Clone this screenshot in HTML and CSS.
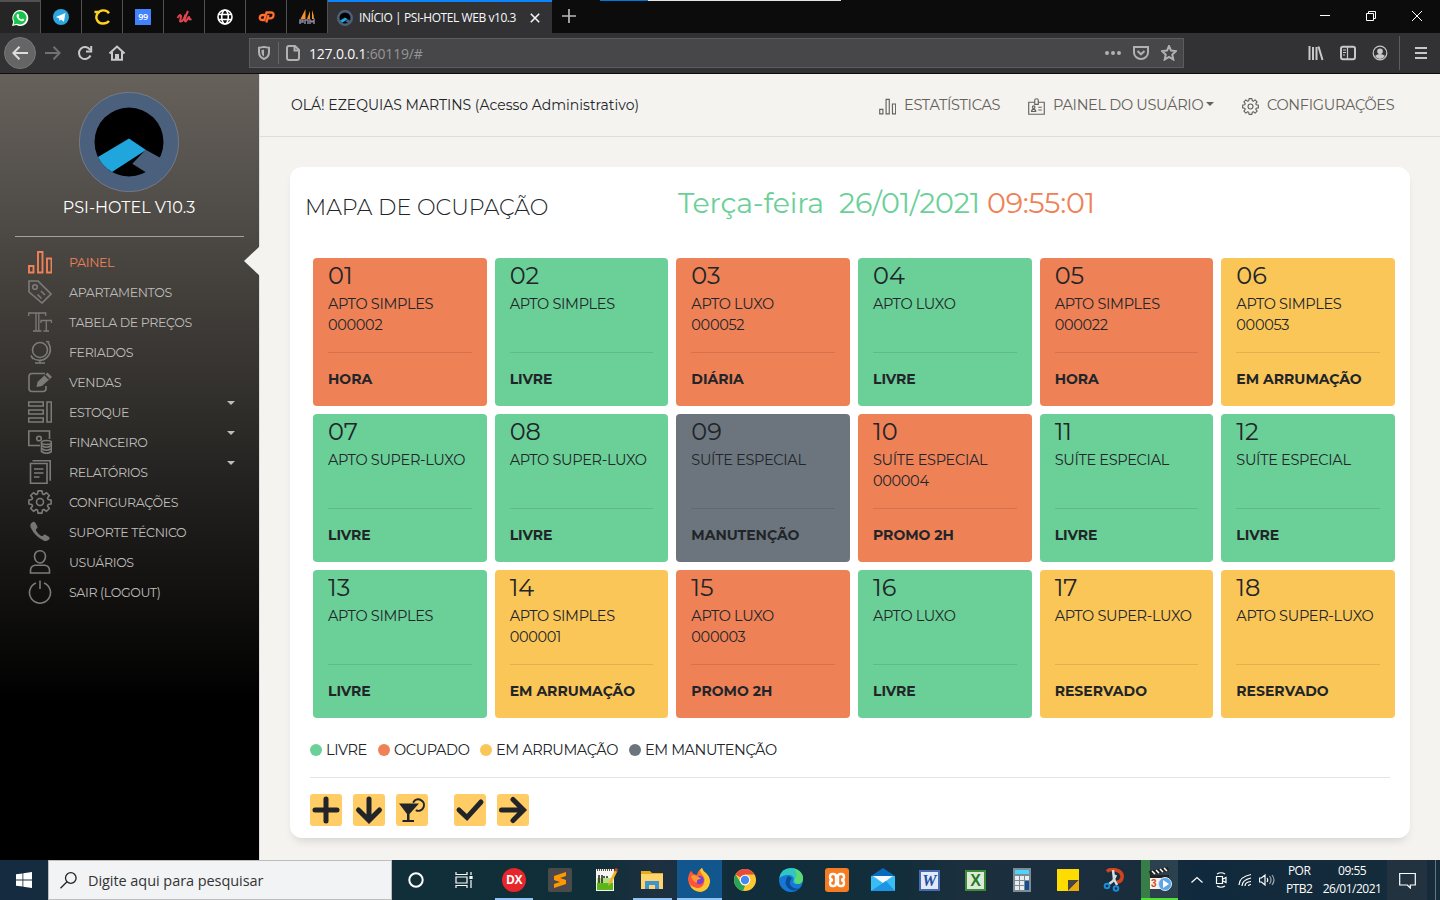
FILE: index.html
```html
<!DOCTYPE html>
<html lang="pt-BR">
<head>
<meta charset="utf-8">
<title>INÍCIO | PSI-HOTEL WEB v10.3</title>
<link rel="stylesheet" href="styles.css">
</head>
<body>
<svg class="defs" aria-hidden="true">
  <symbol id="i-bars" viewBox="0 0 24 24"><path d="M1 16h4.500v6.500H1zM10 2h4.500v20.500H10zM19 8.500h4.500v14H19z"/></symbol>
  <symbol id="i-gear" viewBox="0 0 24 24"><circle cx="12" cy="12" r="3.500"/><path stroke-linejoin="round" d="M9.500 3.900 10 .9h4l.5 3 1.500.6 2.500-1.800 2.800 2.800L19.500 8l.6 1.500 3 .5v4l-3 .5-.6 1.500 1.800 2.500-2.800 2.800-2.500-1.800-1.500.6-.5 3h-4l-.5-3-1.500-.6-2.500 1.800-2.800-2.800L4.500 16l-.6-1.500-3-.5v-4l3-.5L4.500 8 2.700 5.500l2.800-2.800L8 4.500z"/></symbol>
  <symbol id="i-logo" viewBox="0 0 100 100"><circle cx="50" cy="50" r="49.700" fill="#4b607c" stroke="#8c8f94" stroke-width=".6"/><circle cx="50" cy="50" r="34.500"/><path d="M50 46.500 67 58 33 80a35 35 0 0 1-14-15z" fill="#20a5dc"/><path d="m66.700 57.700 19 10.500L72 83.500 53.300 71.700z" fill="#4b607c"/></symbol>
</svg>
<div class="screen">
  <header class="browser">
    <div class="tabs">
      <div class="pin on"><svg width="18" height="18" viewBox="0 0 18 18"><path d="m1 17 1.200-4.300A8 8 0 1 1 5.400 16z" fill="#fff"/><path d="m2.600 15.400.8-2.900A6.600 6.600 0 1 1 6 14.800z" fill="#18c24b"/><path d="M6.300 5q1-1 1.600 1l.3 1-.7 1q1 1.800 2.900 2.400l.9-1 2 1.100q-.4 2.200-2.700 1.700Q6.500 11 5.600 7.500 5.300 6 6.300 5z" fill="#fff"/></svg></div>
      <div class="pin"><svg width="16" height="16" viewBox="0 0 16 16"><circle cx="8" cy="8" r="8" fill="#2ca5e0"/><path d="m2.800 8 9.700-4-1.600 8.700-3-2.100-1.500 1.500-.3-2.800z" fill="#fff"/></svg></div>
      <div class="pin"><svg width="16" height="16" viewBox="0 0 16 16" fill="none" stroke="#ffd21c" stroke-width="2.400"><path d="M.5 3H6M15 4.200C12 .2 6 .7 3.600 4.400 0 10 5 15 9 14.500q4 0 6-2.500"/></svg></div>
      <div class="pin"><span class="n99">99</span></div>
      <div class="pin"><svg width="16" height="16" viewBox="0 0 16 16" fill="none" stroke="#e2474f" stroke-width="2"><path d="M1.500 9q3-5 3.500-1.500C5 10 3 13 5 12.500c2 0 4-5 4.500-7M12 2C9 8 8 12.500 9.500 12.500S12 8 13 8s-1 4 2.500 2"/></svg></div>
      <div class="pin"><svg width="16" height="16" viewBox="0 0 16 16" fill="none" stroke="#fff" stroke-width="1.600"><circle cx="8" cy="8" r="7"/><ellipse cx="8" cy="8" rx="3.300" ry="7"/><path d="M1.500 5.500h13M1.500 10.500h13"/></svg></div>
      <div class="pin"><svg width="17" height="16" viewBox="0 0 17 16" fill="none" stroke="#ff6c2c" stroke-width="2.300"><path d="M7 6H5Q2 6 1.800 8.500T4.500 11H6.300L8.500 3.500H13q3 0 2.500 3T12 9.300h-1.500M10.500 6 8.300 13.500"/></svg></div>
      <div class="pin"><svg width="18" height="18" viewBox="0 0 18 18"><path d="M7.500 1v10H2.500zM12 3v8H9zM14 2q2 5 2 9h-2z" fill="#f79420"/><path d="M2 16v-4h3v2H2m5 2v-4h3v4m2 0v-4l2 2 2-2v4" fill="none" stroke="#8987a3" stroke-width="1.500"/></svg></div>
      <div class="tab"><svg width="16" height="16"><use href="#i-logo"/></svg><span class="tabname">INÍCIO | PSI-HOTEL WEB v10.3</span><svg class="x" width="10" height="10" viewBox="0 0 10 10"><path d="m.8.800 8.400 8.400M9.200.8.800 9.200" stroke="#f4f4f4" stroke-width="1.600"/></svg></div>
      <svg class="plus" width="14" height="14" viewBox="0 0 14 14"><path d="M7 0v14M0 7h14" stroke="#b9b9ba" stroke-width="1.700"/></svg>
      <div class="loadbar"></div>
      <div class="win">
        <svg width="10" height="10" viewBox="0 0 10 10"><path d="M0 4.500h10"/></svg>
        <svg width="10" height="10" viewBox="0 0 10 10"><path d="M.5 2.500h7v7h-7zM2.500 2V.5h7v7H8"/></svg>
        <svg width="10" height="10" viewBox="0 0 10 10"><path d="m0 0 10 10M10 0 0 10"/></svg>
      </div>
    </div>
    <div class="toolbar">
      <div class="back"><svg width="16" height="14" viewBox="0 0 16 14"><path d="M16 7H1.500M7.500.8 1.300 7l6.200 6.200"/></svg></div>
      <svg class="fwd" width="16" height="14" viewBox="0 0 16 14"><path d="M0 7h14.500M8.500.8 14.700 7l-6.200 6.200"/></svg>
      <svg class="rel" width="16" height="16" viewBox="0 0 16 16"><path d="M13.500 10.500A6 6 0 1 1 13 4.700M14.200 1v5.500H9"/></svg>
      <svg class="home" width="16" height="16" viewBox="0 0 16 16"><path d="m.5 8.500 7.500-7 7.500 7M3 7v7.800h10V7M7 14.500V10h2v4.500"/></svg>
      <div class="url">
        <svg width="12" height="14" viewBox="0 0 12 14"><path d="M1 1.800Q4 1.500 6 .9q2 .6 5 .9v4.500Q11 11 6 13 1 11 1 6.300z"/><path d="M6 3.500q-2 .5-2.500.5Q3 9 6 10.500" fill="#b1b1b3" stroke="none"/></svg>
        <i></i>
        <svg width="14" height="16" viewBox="0 0 14 16"><path d="M3 1h6l4 4v8q0 2-2 2H3q-2 0-2-2V3q0-2 2-2zM8.500 1v4.500H13"/></svg>
        <span class="addr">127.0.0.1<em>:60119/#</em></span>
        <svg class="dots" width="16" height="16" viewBox="0 0 16 16"><path d="M2 6a2 2 0 1 1 0 4 2 2 0 0 1 0-4m6 0a2 2 0 1 1 0 4 2 2 0 0 1 0-4m6 0a2 2 0 1 1 0 4 2 2 0 0 1 0-4" fill="#b1b1b3" stroke="none"/></svg>
        <svg width="16" height="16" viewBox="0 0 16 16"><path d="M1 2h14v5.500a7 6.500 0 0 1-14 0zM4.500 6 8 9.300 11.500 6"/></svg>
        <svg width="16" height="16" viewBox="0 0 16 16"><path d="m8 1 2 4.600 5 .5-3.700 3.400 1 5L8 12l-4.300 2.500 1-5L1 6.100l5-.5z"/></svg>
      </div>
      <div class="tools">
        <svg width="16" height="16" viewBox="0 0 16 16"><path d="M1.500 1v14M5 2v13M8.500 2v13M10.500 1.500l4 13.500"/></svg>
        <svg width="16" height="16" viewBox="0 0 16 16"><rect x="1" y="1.800" width="14" height="12.400" rx="2"/><path d="M7.500 2v12M3 5h3M3 7.500h3M3 10h2" stroke-width="1.200"/></svg>
        <svg width="16" height="16" viewBox="0 0 16 16"><circle cx="8" cy="8" r="6.800" stroke-width="1.200"/><circle cx="8" cy="6.300" r="2.800" fill="#c8c8ca" stroke="none"/><path d="M3 11q2-2 5-2t5 2q-2 3-5 3t-5-3" fill="#c8c8ca" stroke="none"/></svg>
        <i></i>
        <svg width="12" height="12" viewBox="0 0 12 12"><path d="M0 1h12M0 6h12M0 11h12"/></svg>
      </div>
    </div>
  </header>

  <div class="app">
    <aside class="side">
      <div class="brand"><svg width="100" height="100"><use href="#i-logo"/></svg><span>PSI-HOTEL V10.3</span></div>
      <nav class="menu">
        <a class="act"><svg><use href="#i-bars"/></svg><span>PAINEL</span></a>
        <a><svg viewBox="0 0 24 24"><path d="M1 1h9l13 13-9 9L1 12z"/><circle cx="7" cy="7" r="2.300"/><path d="m9.500 14.500 4 4M13 11l4 4"/></svg><span>APARTAMENTOS</span></a>
        <a><svg viewBox="0 0 24 24"><path d="M.7 6V3h17v3M8 3v18M10.800 3v18M5 21h8.500M13 13v-2.500h10.500V13M18.300 10.500V21M15.500 21h5.500" stroke-width="1.300"/></svg><span>TABELA DE PREÇOS</span></a>
        <a><svg viewBox="0 0 24 24"><circle cx="12" cy="10" r="7.500"/><path d="M18 1.500 21.500 2M20 2.500a11 11 0 0 1-16 15M3 15.500l2 3.500M12 20.500V23M7 23h10"/></svg><span>FERIADOS</span></a>
        <a><svg viewBox="0 0 24 24"><path d="M17 3.500H4Q1 3.500 1 6.500v12q0 3 3 3h11q3 0 3-3V16"/><path d="m8.500 17 1-5L19.500 2.500l4.500 4.500-10 9z" fill="#7d7b78" stroke="none"/><path d="m17 5 4 4" stroke="#35322f"/></svg><span>VENDAS</span></a>
        <a><svg viewBox="0 0 24 24"><path d="M.7 2h14.500v4H.7zM.7 10h14.500v4H.7zM.7 18h14.500v4H.7zM19 2h4.300v20H19z"/></svg><span>ESTOQUE</span><b></b></a>
        <a><svg viewBox="0 0 24 24"><path d="M12 15.500H.8V1h20.700v8"/><circle cx="11" cy="8.500" r="2.300"/><ellipse cx="18.500" cy="12.500" rx="5" ry="2"/><path d="M13.500 12.500v9q5 3.500 10 0v-9m-10 3q5 3.500 10 0m-10 3q5 3.500 10 0"/></svg><span>FINANCEIRO</span><b></b></a>
        <a><svg viewBox="0 0 24 24"><path d="M2.500 3.500H19v19.700H2.500zM4.500.8h17.700v20M6 9h9.500M6 13h9.500M6 17h5.500"/></svg><span>RELATÓRIOS</span><b></b></a>
        <a><svg><use href="#i-gear"/></svg><span>CONFIGURAÇÕES</span></a>
        <a><svg viewBox="0 0 24 24"><path d="M4 2.500q2-1.500 3.300.3l2 3.500q.7 1.500-.8 2.500-1.200 1-.3 2.300 2 3.200 5 4.800 1.200.5 2-.5 1-1.300 2.300-.7l3.300 2q1.500 1 .5 2.500Q19 22 15.500 20.500 6.500 16 2.700 7.500 1.500 4.500 4 2.500z" fill="#777573" stroke="none"/></svg><span>SUPORTE TÉCNICO</span></a>
        <a><svg viewBox="0 0 24 24"><path d="M12 .8c3.500 0 5.500 2.500 5.500 5.500S15.500 13 12 13 6.500 9.500 6.500 6.300 8.500.8 12 .8zM2.500 23v-2.500Q2.500 16 7 15.300h10q4.500.7 4.500 5.200V23z"/></svg><span>USUÁRIOS</span></a>
        <a><svg viewBox="0 0 24 24"><path d="M12 .5V9M8 3a10.500 10.500 0 1 0 8 0"/></svg><span>SAIR (LOGOUT)</span></a>
      </nav>
      <div class="notch"></div>
    </aside>

    <main class="main">
      <div class="top">
        <span class="hello">OLÁ! EZEQUIAS MARTINS (Acesso Administrativo)</span>
        <a class="l1"><svg><use href="#i-bars"/></svg><span>ESTATÍSTICAS</span></a>
        <a class="l2"><svg viewBox="0 0 24 24"><path d="M9 6H1v17h22V6h-8M9.500 9V3q0-2 2.500-2t2.500 2v6zM14.500 13h5M14.500 17h5M5 19q0-3 3-3t3 3z"/><circle cx="8" cy="13" r="1.800"/></svg><span>PAINEL DO USUÁRIO</span><b></b></a>
        <a class="l3"><svg><use href="#i-gear"/></svg><span>CONFIGURAÇÕES</span></a>
      </div>
      <section class="panel">
        <div class="head"><h1>MAPA DE OCUPAÇÃO</h1><div class="clock"><span class="day">Terça-feira</span><span class="date">26/01/2021</span><span class="time">09:55:01</span></div></div>
        <div class="grid">
          <div class="room r"><h2>01</h2><p>APTO SIMPLES<br>000002</p><strong>HORA</strong></div>
          <div class="room g"><h2>02</h2><p>APTO SIMPLES</p><strong>LIVRE</strong></div>
          <div class="room r"><h2>03</h2><p>APTO LUXO<br>000052</p><strong>DIÁRIA</strong></div>
          <div class="room g"><h2>04</h2><p>APTO LUXO</p><strong>LIVRE</strong></div>
          <div class="room r"><h2>05</h2><p>APTO SIMPLES<br>000022</p><strong>HORA</strong></div>
          <div class="room y"><h2>06</h2><p>APTO SIMPLES<br>000053</p><strong>EM ARRUMAÇÃO</strong></div>
          <div class="room g"><h2>07</h2><p>APTO SUPER-LUXO</p><strong>LIVRE</strong></div>
          <div class="room g"><h2>08</h2><p>APTO SUPER-LUXO</p><strong>LIVRE</strong></div>
          <div class="room k"><h2>09</h2><p>SUÍTE ESPECIAL</p><strong>MANUTENÇÃO</strong></div>
          <div class="room r"><h2>10</h2><p>SUÍTE ESPECIAL<br>000004</p><strong>PROMO 2H</strong></div>
          <div class="room g"><h2>11</h2><p>SUÍTE ESPECIAL</p><strong>LIVRE</strong></div>
          <div class="room g"><h2>12</h2><p>SUÍTE ESPECIAL</p><strong>LIVRE</strong></div>
          <div class="room g"><h2>13</h2><p>APTO SIMPLES</p><strong>LIVRE</strong></div>
          <div class="room y"><h2>14</h2><p>APTO SIMPLES<br>000001</p><strong>EM ARRUMAÇÃO</strong></div>
          <div class="room r"><h2>15</h2><p>APTO LUXO<br>000003</p><strong>PROMO 2H</strong></div>
          <div class="room g"><h2>16</h2><p>APTO LUXO</p><strong>LIVRE</strong></div>
          <div class="room y"><h2>17</h2><p>APTO SUPER-LUXO</p><strong>RESERVADO</strong></div>
          <div class="room y"><h2>18</h2><p>APTO SUPER-LUXO</p><strong>RESERVADO</strong></div>
        </div>
        <div class="legend">
          <span class="k1"><i class="g"></i>LIVRE</span><span class="k2"><i class="r"></i>OCUPADO</span><span class="k3"><i class="y"></i>EM ARRUMAÇÃO</span><span class="k4"><i class="k"></i>EM MANUTENÇÃO</span>
        </div>
        <div class="actions">
          <button><svg viewBox="0 0 32 32"><path d="M16 5v22M5 16h22"/></svg></button>
          <button><svg viewBox="0 0 32 32"><path d="M16 5v21M5.500 16 16 26.500 26.500 16"/></svg></button>
          <button class="bar"><svg viewBox="0 0 32 32"><path d="M3 9.500h20L13.500 20v6H18v2H6.500v-2H11v-6z" fill="#212529" stroke="none"/><path d="M17.500 8a5.700 5.700 0 1 1 3 8.500" stroke-width="2"/></svg></button>
          <button><svg viewBox="0 0 32 32"><path d="m5 16 8 7.500L27 8"/></svg></button>
          <button><svg viewBox="0 0 32 32"><path d="M4.500 16H26M16 5.500 26.500 16 16 26.500"/></svg></button>
        </div>
      </section>
    </main>
  </div>

  <footer class="taskbar">
    <div class="start"><svg width="16" height="16" viewBox="0 0 16 16"><path d="m0 2.300 6.500-.9v6.200H0zM7.300 1.300 16 0v7.600H7.300zM0 8.400h6.500v6.200L0 13.700zM7.300 8.400H16V16l-8.700-1.300z" fill="#fff"/></svg></div>
    <div class="search"><svg width="17" height="17" viewBox="0 0 17 17" fill="none" stroke="#222" stroke-width="1.300"><circle cx="10.800" cy="6" r="5.300"/><path d="M7 9.800.5 16.300"/></svg><span>Digite aqui para pesquisar</span></div>
    <div class="apps">
      <div><svg viewBox="0 0 24 24"><circle cx="12" cy="12" r="6.700" fill="none" stroke="#fff" stroke-width="2"/></svg></div>
      <div><svg viewBox="0 0 24 24" fill="none" stroke="#fff" stroke-width="1.200"><path d="M3 4v2.500h11V4M3 20v-2.500h11V20M3 9h11v6H3zM18 4v3M18 12v8"/><path d="M17 8.500h2v2h-2z" fill="#fff"/></svg></div>
      <div class="run"><span class="dx">DX</span></div>
      <div><svg viewBox="0 0 24 24"><rect width="24" height="24" rx="2" fill="#4a4a4a"/><path d="m6 8 12-4v4l-6 2 6 2v4L6 20v-4l6-2-6-2z" fill="#ff9800"/></svg></div>
      <div><svg viewBox="0 0 24 24"><path d="M2 1h18v22H2z" fill="#f5f5ee"/><path d="M3 12h16v10H3z" fill="#5db51c"/><path d="M3 10h16v5H3z" fill="#b4e080"/><path d="M5 7v8M8 7v8M9 9h2m1 0h2" stroke="#222" stroke-width="1.500"/><path d="M3 2h15" stroke="#555" stroke-width="2" stroke-dasharray="1 1"/><path d="m14 18 1-4 6-12 2.500 1-6 12z" fill="#f2b32a"/><path d="m20.500 2.500 1-2.500L24 1l-1 3z" fill="#c43"/></svg></div>
      <div class="run"><svg viewBox="0 0 24 24"><path d="M1 3h9l2 2h11v16H1z" fill="#e8a91e"/><path d="M1 6h22v15H1z" fill="#ffd56b"/><path d="M5 21v-8h14v8h-4v-4H9v4z" fill="#3f93d3"/></svg></div>
      <div class="run cur"><svg viewBox="0 0 24 24"><path d="M1 11Q2 5 4 3l2 3 4 1q1-5 5-7l1 4q7 3 7 9-1 9-11 10Q2 22 1 11" fill="#ff6b2c"/><path d="M15 0q1 3 4 5 4 4 4 9-1 8-9 10-8 0-11-7 8 6 13 0 4-6-2-12-2-3 1-5" fill="#ffc72e"/><path d="M1 11 4 3l3 3 2 2 8 4q0 9-7 8-7-2-9-9" fill="#ff4b42" opacity=".75"/><circle cx="12.500" cy="12" r="4.300" fill="#7543d1"/><path d="m4 8 3-1 5 2 2 2q-5 0-4 4-4-1-6-7" fill="#ff972d"/></svg></div>
      <div><svg viewBox="0 0 24 24"><circle cx="12" cy="12" r="11" fill="#fdc92e"/><path d="M12 12 2.500 6.500a11 11 0 0 1 19 0H12z" fill="#e84b3c"/><path d="M2.500 6.500 9 17l3 1-2 4.800A11 11 0 0 1 2.500 6.500" fill="#28a35a"/><circle cx="12" cy="12" r="5.300" fill="#fff"/><circle cx="12" cy="12" r="4.200" fill="#4489f3"/></svg></div>
      <div><svg viewBox="0 0 24 24"><circle cx="12" cy="12" r="12" fill="#1478d4"/><path d="M.5 10Q2 0 12 0c8 0 12 6 12 10s-3 6-6 6-5-2-3-4q0-5-6-5-5 0-8.500 3" fill="#2fc6c4"/><path d="M15 .5q9 3 9 9.500t-6 6l-3-4q5-4 0-11.500" fill="#5cda70"/><path d="M9 8q-5 7 0 12 6 5 12 0-5 2-9-2-3-4 1-8z" fill="#0c4c97"/></svg></div>
      <div><svg viewBox="0 0 24 24"><rect width="24" height="24" rx="3" fill="#f57c22"/><path d="M7.500 6h1Q11 6 11 8.500V11h2V8.500Q13 6 15.500 6h1Q19 6 19 9t-3 3q3 0 3 3t-2.500 3h-1Q13 18 13 15.500V13h-2v2.500Q11 18 8.500 18h-1Q5 18 5 15t3-3Q5 12 5 9t2.500-3z" fill="none" stroke="#fff" stroke-width="2.400"/></svg></div>
      <div><svg viewBox="0 0 24 24"><path d="m0 8 12-8 12 8z" fill="#0869bd"/><path d="M0 8h24v15H0z" fill="#38bdf5"/><path d="M2 8h20l-10 7z" fill="#f5f8fc"/><path d="m0 23 15-10 9 10z" fill="#1d95e5"/></svg></div>
      <div><span class="office word">W</span></div>
      <div><span class="office excel">X</span></div>
      <div><svg viewBox="0 0 24 24"><path d="M3 0h18v24H3z" fill="#7d8b94"/><path d="M5 2h14v4H5z" fill="#4dd4fc"/><path d="M5 8h4v4H5zm5 0h4v4h-4zm5 0h4v4h-4zM5 13h4v4H5zm5 0h4v4h-4zM5 18h4v4H5zm5 0h4v4h-4z" fill="#e9edf0"/><path d="M15 13h4v9h-4z" fill="#164c91"/></svg></div>
      <div><svg viewBox="0 0 24 24"><path d="M1 1h22v22H1z" fill="#ffdc00"/><path d="M12 23V12h11z" fill="#444"/><path d="M12 23 23 12v11z" fill="#e9aa0b"/></svg></div>
      <div><svg viewBox="0 0 24 24" fill="none"><path d="M5 3.500Q8 .5 14 2q7 2 6 8-1 4-5 4" stroke="#d3441e" stroke-width="3.500"/><path d="m11 2 1 9 3 6M14 7l-3 6-4 3" stroke="#d7dde0" stroke-width="2.500"/><circle cx="5" cy="18" r="2.300" stroke="#178ddc" stroke-width="2"/><circle cx="14" cy="20.500" r="2.300" stroke="#178ddc" stroke-width="2"/></svg></div>
      <div class="movie"><svg viewBox="0 0 24 24"><path d="M2 9h19v13H2z" fill="#f7f2ed"/><path d="m1 4 19-4 1 4L2 8zM2 8h19v3H2z" fill="#222"/><path d="m4 4 3 3m1-4 3 3m1-4 3 3m1-4 3 3" stroke="#fff" stroke-width="1.500"/><text x="3" y="20">3</text><circle cx="17" cy="17" r="6.500" fill="#5ca5e8" stroke="#d7e8f7"/><path d="m15 13 6 4-6 4z" fill="#fff"/></svg></div>
    </div>
    <div class="tray">
      <svg width="12" height="8" viewBox="0 0 12 8"><path d="m.5 6.500 5.500-5 5.500 5"/></svg>
      <svg width="12" height="16" viewBox="0 0 12 16"><path d="M1.500 4.500h6v7h-6zM8 7l3-1.500v5L8 9M2 2q4-2.500 8 0M2 14q4 2.500 8 0"/></svg>
      <svg width="14" height="14" viewBox="0 0 14 14"><path d="M1 12Q1 4 13 1.500M4 13Q4 7 13 5M7 13q0-4 6-4.500M10.500 13q0-1.500 2.500-1.500"/></svg>
      <svg width="16" height="14" viewBox="0 0 16 14"><path d="M.5 5h2L6 2v10L2.500 9h-2zM8 5q1.500 2 0 4"/><path d="M10.500 3q3 4 0 8M13 2q4 5 0 10" opacity=".6"/></svg>
      <div class="two lang">POR<br>PTB2</div>
      <div class="two when">09:55<br>26/01/2021</div>
      <div class="note"><svg width="17" height="17" viewBox="0 0 17 17"><path d="M.7 1.500h15.600V13h-5v3l-3-3H.7z"/></svg></div>
      <div class="edge"></div>
    </div>
  </footer>
</div>
</body>
</html>
```
FILE: styles.css
```css
* { box-sizing: border-box; }
body { margin: 0; font-family: Montserrat, Inter, sans-serif; color: #212529; overflow: hidden; }
h1, h2, p { margin: 0; font-weight: 300; }
svg { flex: none; }
.defs { display: none; }
.screen { width: 1440px; height: 900px; display: flex; flex-direction: column; }

/* browser chrome */
.browser { height: 74px; background: #323234; border-bottom: 1px solid #0c0c0d; font-family: "Open Sans", sans-serif; flex: none; }
.tabs { height: 33px; background: #0c0c0d; display: flex; position: relative; }
.pin { width: 41px; border-right: 1px solid #515152; display: flex; align-items: center; justify-content: center; padding-top: 1px; }
.pin.on { background: #252526; border-top: 2px solid #515152; padding: 0; }
.n99 { width: 16px; height: 16px; background: #4182ff; color: #fff; font-size: 9px; font-weight: 600; line-height: 16px; text-align: center; letter-spacing: -.5px; }
.tab { width: 224px; background: #323234; border-top: 2px solid #0a84ff; display: flex; align-items: center; padding-left: 9px; }
.tabname { color: #f9f9fa; font-size: 12px; letter-spacing: -.43px; width: 171px; margin-left: 6px; white-space: nowrap; }
.plus { margin: 9px 0 0 10px; }
.loadbar { position: absolute; left: 600px; top: 0; width: 241px; height: 1px; background: linear-gradient(90deg, #0078d7 48px, #e6e6e6 48px); }
.win { margin-left: auto; display: flex; gap: 36px; padding: 11px 18px 0 0; fill: none; stroke: #fff; }
.toolbar { height: 40px; display: flex; align-items: center; padding-left: 4px; fill: none; stroke: #b1b1b3; stroke-width: 2; }
.back { width: 32px; height: 32px; border-radius: 50%; background: #656566; border: 1px solid #777; display: flex; align-items: center; justify-content: center; stroke: #ddd; }
.fwd { margin-left: 9px; stroke: #717173; }
.rel { margin-left: 16px; }
.home { margin-left: 16px; }
.rel, .home { stroke: #c8c8ca; }
.url { margin-left: 124px; width: 935px; height: 30px; background: #474749; border: 1px solid #5c5c5e; display: flex; align-items: center; padding: 0 6px 0 8px; }
.url i { width: 1px; height: 22px; background: #65656b; margin: 0 7px 0 8px; }
.url svg:nth-of-type(n+4) { margin-left: 12px; }
.addr { color: #f9f9fa; font-size: 14px; letter-spacing: -.2px; margin-left: 9px; flex: 1; }
.addr em { font-style: normal; color: #969698; }
.tools { display: flex; align-items: center; flex: 1; justify-content: flex-end; gap: 16px; padding-right: 13px; stroke: #c8c8ca; }
.tools i { width: 1px; height: 34px; background: #5c5c5e; margin: 0 -1px 0 -5px; }

/* application */
.app { display: flex; height: 786px; flex: none; }
.side { width: 260px; position: relative; background: linear-gradient(#66615b, #000 80%); border-right: 1px solid #ddd; padding: 18px 15px 0; }
.brand { height: 145px; border-bottom: 1px solid #a5a29e; display: flex; flex-direction: column; align-items: center; color: #fff; font-size: 16px; line-height: 32px; padding-right: 1px; }
.menu { padding-top: 10px; fill: none; stroke: #7d7b78; stroke-width: 1.600; }
.menu a { display: flex; height: 30px; align-items: center; padding-left: 13px; color: #bfbdbb; font-size: 12.600px; letter-spacing: -.38px; position: relative; }
.menu span { margin-top: 1px; }
.menu svg { width: 24px; height: 24px; margin-right: 17px; }
.menu b, .top b { border: 4px solid transparent; border-top-color: currentColor; border-bottom: 0; }
.menu b { margin: -18px 9px 0 auto; }
.menu .act { color: #ef8157; stroke: #ef8157; stroke-width: 1.900; }
.notch { position: absolute; right: -1px; top: 172px; border: 15px solid transparent; border-right: 16px solid #f4f3ef; border-left: 0; }
.main { flex: 1; background: #f4f3ef; }
.top { height: 63px; border-bottom: 1px solid #ddd; display: flex; align-items: center; padding: 0 45px 0 31px; font-size: 14px; }
.hello { flex: 1; }
.top a { display: flex; align-items: center; color: #66615b; font-size: 14.500px; letter-spacing: -.3px; fill: none; stroke: #66615b; stroke-width: 1.600; white-space: nowrap; }
.top svg { width: 17px; height: 17px; margin: 2px 8px 0 0; }
.top a span { margin-top: -1px; }
.l1 span { width: 96px; } .l2 span { width: 152px; } .l3 span { width: 128px; }
.l2 { margin: 0 28px; }
.top b { margin: -2px 0 0 1px; }
.l1 { margin-right: 0; }
.l2 svg { margin-right: 8px; }
.panel { margin: 30px 30px 0; height: 671px; background: #fff; border-radius: 12px; box-shadow: 0 6px 10px -4px rgba(0,0,0,.15); padding: 0 15px; }
.head { height: 91px; display: flex; padding: 20px 0 0 0; }
h1 { font-size: 22.200px; line-height: 41px; width: 373px; }
.clock { font-size: 28.500px; line-height: 32px; font-weight: 400; letter-spacing: -.22px; color: #6bd098; display: flex; white-space: nowrap; }
.day { width: 161px; } .date { width: 148px; } .time { color: #ef8157; }
.grid { display: grid; grid-template-columns: repeat(6, 1fr); grid-auto-rows: 148px; gap: 8px; padding-left: 8px; }
.room { border-radius: 4px; padding: 2px 15px 0; }
h2 { font-size: 24px; line-height: 32px; font-weight: 400; }
.room p { height: 61px; border-bottom: 1px solid rgba(0,0,0,.1); font-size: 14.500px; font-weight: 400; letter-spacing: -.32px; line-height: 21px; padding-top: 2px; white-space: nowrap; }
.room strong { display: block; font-size: 14px; line-height: 21px; margin-top: 16px; }
.g { background: #6bd098; } .r { background: #ef8157; } .y { background: #fbc658; } .k { background: #6c757d; }
.legend { height: 60px; margin: 0 5px; border-bottom: 1px solid #e5e5e5; display: flex; align-items: center; padding-top: 4px; font-size: 14.500px; letter-spacing: -.4px; white-space: nowrap; }
.legend span { display: flex; align-items: center; }
.legend i { width: 12px; height: 12px; border-radius: 50%; margin-right: 4px; }
.k1 { width: 68px; } .k2 { width: 102px; } .k3 { width: 149px; }
.actions { display: flex; gap: 11px; padding: 16px 5px; }
.actions button { width: 32px; height: 32px; padding: 0; border: 0; border-radius: 3px; background: #ffcc66; }
.actions svg { display: block; fill: none; stroke: #212529; stroke-width: 5; stroke-linecap: round; }
.bar { margin-right: 15px; }

/* taskbar */
.taskbar { height: 40px; background: linear-gradient(90deg, #152b40, #142c3e 50px, #102f38 430px, #102e38 600px, #1e3041 655px, #112d3b 730px, #122e3a 900px, #1b2f3d 960px, #192d3d 1140px, #10293c 1200px, #162c3b 1440px); display: flex; font-family: "Open Sans", sans-serif; }
.start { width: 48px; display: flex; align-items: center; justify-content: center; }
.search { width: 344px; background: #f2f3f5; border: 1px solid #bdbdbd; display: flex; align-items: center; padding-left: 11px; color: #333; font-size: 14.500px; letter-spacing: -.06px; }
.search span { margin-left: 11px; }
.apps { display: grid; grid-template-columns: 46px 52px repeat(15, 46.150px); margin-left: 1px; }
.apps div { display: flex; align-items: center; justify-content: center; position: relative; }
.apps svg { width: 24px; height: 24px; }
.apps text { font: bold 10px "Liberation Sans"; fill: #d34818; }
.apps .run { border-bottom: 2px solid #8fc4f5; margin: 0 4px; padding-top: 2px; }
.apps .cur { background: #11568d; margin: 0 0 0 1px; }
.dx { width: 24px; height: 24px; border-radius: 50%; background: #e7252b; color: #fff; font-size: 12px; font-weight: 700; line-height: 24px; text-align: center; letter-spacing: -.5px; }
.office { width: 21px; height: 21px; border: 2px solid #456bb2; background: #e2eafa; color: #244c9c; font: italic bold 16px/17px "Liberation Serif", serif; text-align: center; }
.excel { border-color: #3f8a3b; background: #dcebd6; color: #287a2b; font-family: "Liberation Sans", sans-serif; font-style: normal; }
.movie { background: linear-gradient(90deg, #377d48 9px, #2c414e 9px); border-bottom: 2px solid #4fe038; margin: 0 5px 0 4px; }
.tray { flex: 1; display: flex; align-items: center; padding-left: 8px; color: #fff; fill: none; stroke: #fff; stroke-width: 1.200; }
.tray svg { margin-right: 11px; }
.tray svg:nth-of-type(1) { margin-right: 12px; }
.tray svg:nth-of-type(3) { margin-right: 7px; }
.two { font-size: 12px; line-height: 18px; text-align: center; letter-spacing: -.5px; padding-bottom: 1px; }
.lang { width: 28px; margin-left: -1px; }
.when { width: 62px; margin-left: 8px; }
.note { margin: 0 8px 0 4px; width: 40px; height: 40px; background: #22323f; display: flex; align-items: center; justify-content: center; }
.tray .note svg { margin: 0; }
.edge { width: 1px; height: 40px; background: #68757e; }
```
